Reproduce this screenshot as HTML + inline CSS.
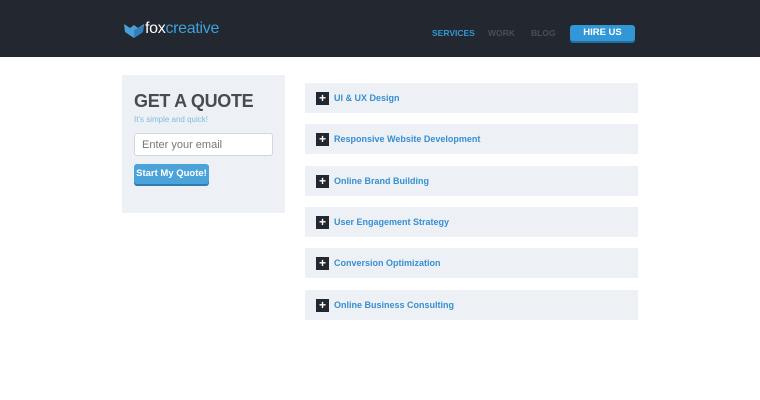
<!DOCTYPE html>
<html><head><style>
*{margin:0;padding:0;box-sizing:border-box}
body{width:760px;height:400px;background:#fff;font-family:"Liberation Sans",sans-serif;position:relative;overflow:hidden}
.hdr{position:absolute;left:0;top:0;width:760px;height:57px;background:#23272f}
.logo{position:absolute;left:124px;top:20px;font-size:16px;letter-spacing:-0.3px}
.nav{position:absolute;top:28px;font-size:8.5px;font-weight:bold}
.hire{position:absolute;left:570px;top:25px;width:65px;height:16px;background:#3197d6;border-radius:3px;box-shadow:0 2px 0 #1f6ea3;color:#fff;font-size:9.5px;font-weight:bold;text-align:center;line-height:16px}
.panel{position:absolute;left:122px;top:75px;width:163px;height:138px;background:#edf1f5}
.panel h1{position:absolute;left:12px;top:16px;font-size:18px;color:#474b52;font-weight:bold;letter-spacing:-0.3px}
.panel .sub{position:absolute;left:12px;top:40px;font-size:8px;color:#7fbbe0}
.inp{position:absolute;left:12px;top:58px;width:139px;height:23px;background:#fff;border:1px solid #d3d6da;border-radius:3px;font-size:11px;color:#777;padding:5px 7px}
.btn{position:absolute;left:12px;top:89px;width:75px;height:20px;background:#4ba3d9;border-radius:3px;box-shadow:0 2px 0 #2f7db0;color:#fff;font-size:9.5px;font-weight:bold;line-height:20px;text-align:center}
.acc{position:absolute;left:305px;width:333px;height:30px;background:#edf1f5}
.acc .p{position:absolute;left:11px;top:9px;width:13px;height:13px;background:#23272f;color:#fff;font-size:12px;line-height:12px;text-align:center;font-weight:bold}
.acc span{position:absolute;left:29px;top:10px;font-size:9px;font-weight:bold;color:#3690d0}
</style></head><body>
<div class="hdr">
<svg style="position:absolute;left:124px;top:22px" width="20" height="16" viewBox="0 0 20 16"><path d="M0 2 L6 6 L10 3 L14 6 L20 2 L19 10 L10 16 L1 10Z" fill="#4a9fd8"/><path d="M10 8 L19 4 L19 10 L10 16Z" fill="#2f80bd"/></svg>
<div class="logo" style="left:145px"><span style="color:#fff">fox</span><span style="color:#3ea0dc">creative</span></div>
<div class="nav" style="left:432px;color:#3197d6">SERVICES</div>
<div class="nav" style="left:488px;color:#4a4f57">WORK</div>
<div class="nav" style="left:531px;color:#4a4f57">BLOG</div>
<div class="hire">HIRE US</div>
</div>
<div class="panel">
<h1>GET A QUOTE</h1>
<div class="sub">It's simple and quick!</div>
<div class="inp">Enter your email</div>
<div class="btn">Start My Quote!</div>
</div>
<div class="acc" style="top:83px"><div class="p">+</div><span>UI &amp; UX Design</span></div>
<div class="acc" style="top:124px"><div class="p">+</div><span>Responsive Website Development</span></div>
<div class="acc" style="top:166px"><div class="p">+</div><span>Online Brand Building</span></div>
<div class="acc" style="top:207px"><div class="p">+</div><span>User Engagement Strategy</span></div>
<div class="acc" style="top:248px"><div class="p">+</div><span>Conversion Optimization</span></div>
<div class="acc" style="top:290px"><div class="p">+</div><span>Online Business Consulting</span></div>
</body></html>
